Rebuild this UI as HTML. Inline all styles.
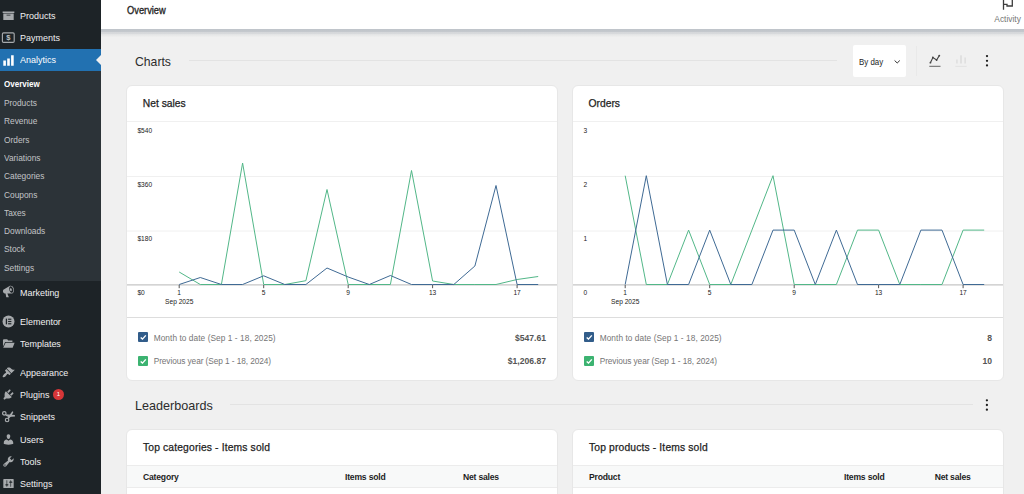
<!DOCTYPE html>
<html><head><meta charset="utf-8"><title>Analytics Overview</title>
<style>
*{box-sizing:border-box;margin:0;padding:0}
html,body{width:1024px;height:494px;overflow:hidden;background:#f0f0f0;font-family:"Liberation Sans",sans-serif;color:#1e1e1e}
#side{position:absolute;left:0;top:0;width:101px;height:494px;background:#1d2327}
#sub{position:absolute;left:0;top:71px;width:101px;height:210px;background:#2c3338}
#cur{position:absolute;left:0;top:48.600px;width:101px;height:22.400px;background:#2271b1}
#cur:after{content:"";position:absolute;right:0;top:6px;border:5.5px solid transparent;border-right-color:#f0f0f0;border-left:0}
.mi{position:absolute;left:20.3px;font-size:9.8px;transform:scaleX(.915);transform-origin:0 0;margin-top:1px;color:#f0f0f1;white-space:nowrap;line-height:12px}
.si{position:absolute;left:4.400px;font-size:8.7px;transform:scaleX(.96);transform-origin:0 0;margin-top:1px;color:#c3c4c7;white-space:nowrap;line-height:12px}
.ic{position:absolute;left:2px;width:14px;height:14px}
#head{position:absolute;left:101px;top:0;width:923px;height:29px;background:#fff}
#shadow{position:absolute;left:101px;top:29px;width:923px;height:8px;background:linear-gradient(#bfc4ca 0,#c4c8cd 32%,#d5d7da 42%,#d8dadc 60%,#e5e6e7 70%,#eaebeb 90%,#f0f0f0 100%)}
.abs{position:absolute;white-space:nowrap}
.card{position:absolute;background:#fff;border:1px solid #e7e7e7;border-radius:6px}
.h2{position:absolute;margin-top:1px;transform:scaleX(.97);transform-origin:0 0;font-size:12.6px;color:#2c2c2c;white-space:nowrap}
.hr{position:absolute;height:1px;background:#e3e3e3}
.ct{position:absolute;font-size:10.3px;-webkit-text-stroke:.25px #1e1e1e;color:#1e1e1e;white-space:nowrap}
.lg{position:absolute;font-size:8.3px;color:#757575;white-space:nowrap}
.lv{position:absolute;font-size:8.6px;font-weight:bold;color:#555;white-space:nowrap;text-align:right}
.cb{position:absolute;width:10.300px;height:10.300px;border-radius:1px}
.cb svg{position:absolute;left:0;top:0}
.th{position:absolute;font-size:8.6px;font-weight:bold;color:#1e1e1e;white-space:nowrap;letter-spacing:-0.2px}
svg.charts{position:absolute;left:0;top:0}
.ax{font-family:"Liberation Sans",sans-serif;font-size:6.6px;fill:#222}
</style></head><body>
<div class="card" style="left:126px;top:85px;width:432px;height:296px"></div>
<div class="card" style="left:572px;top:85px;width:432px;height:296px"></div>
<div class="card" style="left:126px;top:429px;width:432px;height:80px"></div>
<div class="card" style="left:572px;top:429px;width:432px;height:80px"></div>

<div id="side"><div id="sub"></div><div id="cur"></div>
<svg class="abs" style="left:1.9px;top:9.3px" width="13" height="13" viewBox="0 0 20 20" fill="#a7aaad"><path d="M19 4v2H1V4h18zM2 7h16v10H2V7zm11 3V9H7v1h6z"/></svg><svg class="abs" style="left:0;top:30px" width="18" height="16" viewBox="0 30 18 16"><rect x="2.400" y="32.900" width="11.800" height="9.500" rx="1.200" fill="none" stroke="#a7aaad" stroke-width="1.150"/><text x="8.300" y="40.400" text-anchor="middle" font-family="Liberation Sans, sans-serif" font-weight="bold" font-size="7.600" fill="#bfc1c4">$</text></svg><svg class="abs" style="left:1.9px;top:53.5px" width="13" height="13" viewBox="0 0 20 20" fill="#fff"><path d="M18 18V2h-4v16h4zm-6 0V7H8v11h4zm-6 0v-8H2v8h4z"/></svg><svg class="abs" style="left:2.4px;top:285px" width="13" height="13" viewBox="0 0 20 20" fill="#a7aaad"><path d="M18.15 5.94c.46 1.62.38 3.22-.02 4.48-.42 1.28-1.26 2.18-2.3 2.48-.16.06-.26.06-.4.06-.06.02-.12.02-.18.02-.06.02-.14.02-.22.02h-6.8l2.22 5.5c.02.14-.06.26-.14.34-.08.1-.24.16-.34.16H6.950c-.1 0-.26-.06-.34-.16-.08-.08-.16-.2-.14-.34l-1-5.500H4.250l-.02-.02c-.5.06-1.080-.18-1.540-.62s-.88-1.080-1.060-1.880c-.24-.8-.2-1.560-.02-2.200.18-.62.58-1.080 1.060-1.300l.02-.02 9-5.400c.1-.06.18-.1.24-.16.06-.04.14-.08.24-.12.16-.08.28-.12.5-.18 1.040-.3 2.240.1 3.220.98s1.840 2.240 2.260 3.860zm-2.580 5.980h-.02c.4-.1.74-.34 1.040-.7.580-.7.860-1.760.860-3.040 0-.64-.1-1.300-.28-1.980-.34-1.360-1.020-2.500-1.780-3.240s-1.680-1.100-2.460-.88c-.82.22-1.400.96-1.700 2-.32 1.040-.28 2.360.06 3.720.38 1.360 1 2.500 1.800 3.240.78.74 1.620 1.100 2.480.88zm-2.540-7.080c.22-.04.42-.02.62.04.38.16.76.48 1.020 1s.42 1.200.42 1.780c0 .3-.04.56-.12.8-.18.48-.44.84-.86.940-.34.1-.8-.06-1.140-.4s-.64-.86-.78-1.500c-.18-.62-.12-1.240.02-1.720s.48-.84.82-.94z"/></svg><svg class="abs" style="left:2.4px;top:315px" width="13" height="13" viewBox="0 0 20 20" fill="#a7aaad"><circle cx="10" cy="10" r="9.2"/><g fill="#1d2327"><rect x="5.8" y="5.6" width="2" height="8.8"/><rect x="9.4" y="5.6" width="5" height="1.8"/><rect x="9.4" y="9.1" width="5" height="1.8"/><rect x="9.4" y="12.6" width="5" height="1.8"/></g></svg><svg class="abs" style="left:2.4px;top:336.5px" width="13" height="13" viewBox="0 0 20 20" fill="#a7aaad"><path d="M1.5 4.5l1-1H8l1.500 2H16v2.200H4.800L1.500 14.500z"/><path d="M5.600 9H19.400l-3 7.500H1.800z"/></svg><svg class="abs" style="left:2.4px;top:365.5px" width="13" height="13" viewBox="0 0 20 20" fill="#a7aaad"><path d="M14.480 11.060L7.410 3.990l1.500-1.500c.5-.56 2.300-.47 3.510.32 1.210.8 1.430 1.280 2.910 2.100 1.180.64 2.450 1.260 4.450.85zm-.71.71L6.700 4.700 4.930 6.470c-.39.39-.39 1.020 0 1.410l1.060 1.060c.39.39.39 1.030 0 1.420-.6.6-1.430 1.110-2.210 1.690-.35.26-.7.53-1.010.84C1.430 14.230.4 16.080 1.400 17.070c.99 1 2.840-.03 4.180-1.360.31-.31.58-.66.85-1.020.57-.78 1.080-1.610 1.690-2.210.39-.39 1.020-.39 1.410 0l1.060 1.060c.39.39 1.020.39 1.410 0z"/></svg><svg class="abs" style="left:2.4px;top:387.5px" width="13" height="13" viewBox="0 0 20 20" fill="#a7aaad"><path d="M13.110 4.360L9.870 7.600 8 5.730l3.240-3.240c.35-.34 1.050-.2 1.560.32.520.51.660 1.210.31 1.550zm-8 1.770l.91-1.120 9.010 9.010-1.190.84c-.71.71-2.630 1.160-3.820 1.160H6.140L4.900 17.260c-.59.59-1.540.59-2.120 0-.59-.58-.59-1.530 0-2.120l1.240-1.240v-3.880c0-1.130.4-3.190 1.090-3.890zm7.260 3.970l3.240-3.240c.34-.35 1.040-.21 1.550.31.520.51.660 1.210.31 1.550l-3.240 3.250z"/></svg><svg class="abs" style="left:0;top:406px" width="20" height="20" viewBox="0 0 20 20"><g fill="none" stroke="#a7aaad" stroke-width="1.200"><circle cx="4.300" cy="7.300" r="1.750"/><circle cx="7.100" cy="14" r="1.750"/></g><path fill="#a7aaad" d="M5.600 8.300L14.800 8.900 15 10.500 8.400 10.900 5.300 9.400z"/><path fill="#a7aaad" d="M7.300 12.300L12.300 5.200 13.400 5.900 11.600 9.600 8.700 12.900z"/></svg><svg class="abs" style="left:2.4px;top:432.5px" width="13" height="13" viewBox="0 0 20 20" fill="#a7aaad"><path d="M10 9.250c-2.270 0-2.730-3.440-2.730-3.440C7 4.020 7.820 2 9.970 2c2.160 0 2.980 2.020 2.710 3.810 0 0-.41 3.440-2.680 3.440zm0 2.570L12.720 10c2.390 0 4.520 2.330 4.520 4.530v2.490s-3.650 1.130-7.240 1.130c-3.650 0-7.240-1.130-7.240-1.130v-2.490c0-2.250 1.940-4.480 4.470-4.480z"/></svg><svg class="abs" style="left:2.4px;top:454.5px" width="13" height="13" viewBox="0 0 20 20" fill="#a7aaad"><path d="M16.680 9.770c-1.340 1.340-3.300 1.670-4.950.99l-5.410 6.520c-.99.99-2.590.99-3.580 0s-.99-2.590 0-3.570l6.520-5.420c-.68-1.650-.35-3.610.99-4.950 1.280-1.280 3.120-1.620 4.720-1.060l-2.890 2.890 2.820 2.820 2.860-2.870c.53 1.580.18 3.390-1.080 4.650zM3.810 16.210c.4.390 1.040.39 1.430 0 .4-.4.4-1.040 0-1.430-.39-.4-1.030-.4-1.430 0-.39.390-.39 1.030 0 1.430z"/></svg><svg class="abs" style="left:2.4px;top:476.5px" width="13" height="13" viewBox="0 0 20 20" fill="#a7aaad"><path d="M18 16V4c0-.55-.45-1-1-1H3c-.55 0-1 .45-1 1v12c0 .55.45 1 1 1h14c.55 0 1-.45 1-1zM8 11h1c.55 0 1 .45 1 1s-.45 1-1 1H8v1.500c0 .28-.22.5-.5.5s-.5-.22-.5-.5V13H6c-.55 0-1-.45-1-1s.45-1 1-1h1V5.500c0-.28.220-.5.5-.5s.5.220.5.5V11zm5-2h-1c-.55 0-1-.45-1-1s.45-1 1-1h1V5.500c0-.28.220-.5.5-.5s.5.220.5.5V7h1c.55 0 1 .45 1 1s-.45 1-1 1h-1v5.500c0 .28-.22.5-.5.5s-.5-.22-.5-.5V9z"/></svg>
<div class="mi" style="top:9px">Products</div>
<div class="mi" style="top:31px">Payments</div>
<div class="mi" style="top:53px;color:#fff">Analytics</div>
<div class="si" style="top:77px;color:#fff;font-weight:bold;transform:scaleX(.925)">Overview</div>
<div class="si" style="top:96px">Products</div>
<div class="si" style="top:114px">Revenue</div>
<div class="si" style="top:133px">Orders</div>
<div class="si" style="top:151px">Variations</div>
<div class="si" style="top:169px">Categories</div>
<div class="si" style="top:188px">Coupons</div>
<div class="si" style="top:206px">Taxes</div>
<div class="si" style="top:224px">Downloads</div>
<div class="si" style="top:242px">Stock</div>
<div class="si" style="top:261px">Settings</div>
<div class="mi" style="top:286px">Marketing</div>
<div class="mi" style="top:315px">Elementor</div>
<div class="mi" style="top:337px">Templates</div>
<div class="mi" style="top:366px">Appearance</div>
<div class="mi" style="top:388px">Plugins</div>
<div class="abs" style="left:53px;top:389px;width:11px;height:11px;border-radius:6px;background:#d63638;color:#fff;font-size:6px;text-align:center;line-height:11px">1</div>
<div class="mi" style="top:410px">Snippets</div>
<div class="mi" style="top:433px">Users</div>
<div class="mi" style="top:455px">Tools</div>
<div class="mi" style="top:477px">Settings</div>
</div>

<div id="head"></div><div id="shadow"></div>
<div class="abs" style="left:127px;top:4.5px;font-size:10px;-webkit-text-stroke:.3px #1e1e1e;color:#1e1e1e;transform:scaleX(.93);transform-origin:0 0">Overview</div>
<div class="abs" style="left:994.3px;top:14px;font-size:8.4px;color:#757575;transform:scaleX(1);transform-origin:0 0">Activity</div>
<svg class="abs" style="left:995px;top:0" width="24" height="12" viewBox="995 0 24 12" fill="none" stroke="#3c3c3c" stroke-width="1.3"><path d="M1003.5 0V9.800M1003.5 4.400H1007V6H1012.300V0"/></svg>

<div class="h2" style="left:135px;top:54px">Charts</div>
<div class="hr" style="left:189px;top:60px;width:648px"></div>
<div class="abs" style="left:853px;top:45px;width:53px;height:32px;background:#fff;border-radius:2px"></div>
<div class="abs" style="left:858.5px;top:56.5px;font-size:8.6px;color:#1e1e1e;transform:scaleX(.92);transform-origin:0 0">By day</div>
<svg class="abs" style="left:890px;top:50px" width="110" height="24" viewBox="890 50 110 24" fill="none"><path d="M894.600 60.500L897.200 63 899.800 60.500" stroke="#333" stroke-width="1"/><path d="M929.300 66.300H940.500" stroke="#555" stroke-width="0.9"/><path d="M930.400 62.700L932.900 57.500 936.600 60 939.300 55.600" stroke="#444" stroke-width="1.1"/><g fill="#444"><circle cx="930.400" cy="62.700" r=".9"/><circle cx="932.900" cy="57.500" r=".9"/><circle cx="936.600" cy="60" r=".9"/><circle cx="939.300" cy="55.600" r=".9"/></g><g fill="#dedede"><rect x="956.200" y="59.500" width="1.500" height="4"/><rect x="960.100" y="55.300" width="1.800" height="8.200"/><rect x="964.400" y="57.500" width="1.500" height="6"/><rect x="955.400" y="65.900" width="11.200" height=".8"/></g><g fill="#1e1e1e"><circle cx="987" cy="56.100" r="1.150"/><circle cx="987" cy="60.800" r="1.150"/><circle cx="987" cy="65.400" r="1.150"/></g></svg>
<div class="abs" style="left:916px;top:46px;width:1px;height:30px;background:#e9e9e9"></div>

<div class="ct" style="left:142.800px;top:98px">Net sales</div>
<div class="ct" style="left:588.500px;top:98px">Orders</div>
<div class="hr" style="left:127px;top:121px;width:430px;background:#e8e8e8"></div>
<div class="hr" style="left:573px;top:121px;width:430px;background:#e8e8e8"></div>
<div class="hr" style="left:127px;top:317px;width:430px;background:#ddd"></div>
<div class="hr" style="left:573px;top:317px;width:430px;background:#ddd"></div>
<svg class="charts" width="1024" height="494" viewBox="0 0 1024 494"><line x1="127" x2="557" y1="121.5" y2="121.5" stroke="#f0f0f0" stroke-width="1"/><line x1="127" x2="557" y1="176.5" y2="176.5" stroke="#f0f0f0" stroke-width="1"/><line x1="127" x2="557" y1="231" y2="231" stroke="#f0f0f0" stroke-width="1"/><line x1="127" x2="557" y1="284.9" y2="284.9" stroke="#c6c6c6" stroke-width="1.15"/><text x="137.4" y="133" class="ax">$540</text><text x="137.4" y="187.2" class="ax">$360</text><text x="137.4" y="241.3" class="ax">$180</text><text x="137.4" y="295.2" class="ax">$0</text><line x1="179.2" x2="179.2" y1="285" y2="288.2" stroke="#555" stroke-width="1"/><text x="179.2" y="295.2" class="ax" text-anchor="middle">1</text><line x1="263.7" x2="263.7" y1="285" y2="288.2" stroke="#555" stroke-width="1"/><text x="263.7" y="295.2" class="ax" text-anchor="middle">5</text><line x1="348.2" x2="348.2" y1="285" y2="288.2" stroke="#555" stroke-width="1"/><text x="348.2" y="295.2" class="ax" text-anchor="middle">9</text><line x1="432.6" x2="432.6" y1="285" y2="288.2" stroke="#555" stroke-width="1"/><text x="432.6" y="295.2" class="ax" text-anchor="middle">13</text><line x1="517.1" x2="517.1" y1="285" y2="288.2" stroke="#555" stroke-width="1"/><text x="517.1" y="295.2" class="ax" text-anchor="middle">17</text><text x="179.2" y="304.3" class="ax" text-anchor="middle">Sep 2025</text><polyline fill="none" stroke="#52b788" stroke-width="1" points="179.2,272.0 200.3,284.5 221.4,284.5 242.6,163.0 263.7,284.5 284.8,284.5 305.9,280.7 327.0,189.5 348.2,284.5 369.3,284.5 390.4,284.5 411.5,170.5 432.6,281.0 453.8,284.5 474.9,284.5 496.0,284.5 517.1,279.5 538.2,276.5"/><polyline fill="none" stroke="#3f6a94" stroke-width="1" points="179.2,284.5 200.3,277.5 221.4,284.5 242.6,284.5 263.7,275.8 284.8,284.5 305.9,284.5 327.0,268.0 348.2,277.0 369.3,284.5 390.4,275.5 411.5,284.5 432.6,284.5 453.8,284.5 474.9,266.0 496.0,185.5 517.1,284.5 538.2,284.5"/><line x1="573" x2="1003" y1="121.5" y2="121.5" stroke="#f0f0f0" stroke-width="1"/><line x1="573" x2="1003" y1="176.5" y2="176.5" stroke="#f0f0f0" stroke-width="1"/><line x1="573" x2="1003" y1="231" y2="231" stroke="#f0f0f0" stroke-width="1"/><line x1="573" x2="1003" y1="284.9" y2="284.9" stroke="#c6c6c6" stroke-width="1.15"/><text x="583.4" y="133" class="ax">3</text><text x="583.4" y="187.2" class="ax">2</text><text x="583.4" y="241.3" class="ax">1</text><text x="583.4" y="295.2" class="ax">0</text><line x1="625.2" x2="625.2" y1="285" y2="288.2" stroke="#555" stroke-width="1"/><text x="625.2" y="295.2" class="ax" text-anchor="middle">1</text><line x1="709.7" x2="709.7" y1="285" y2="288.2" stroke="#555" stroke-width="1"/><text x="709.7" y="295.2" class="ax" text-anchor="middle">5</text><line x1="794.2" x2="794.2" y1="285" y2="288.2" stroke="#555" stroke-width="1"/><text x="794.2" y="295.2" class="ax" text-anchor="middle">9</text><line x1="878.6" x2="878.6" y1="285" y2="288.2" stroke="#555" stroke-width="1"/><text x="878.6" y="295.2" class="ax" text-anchor="middle">13</text><line x1="963.1" x2="963.1" y1="285" y2="288.2" stroke="#555" stroke-width="1"/><text x="963.1" y="295.2" class="ax" text-anchor="middle">17</text><text x="625.2" y="304.3" class="ax" text-anchor="middle">Sep 2025</text><polyline fill="none" stroke="#52b788" stroke-width="1" points="625.2,175.7 646.3,284.5 667.4,284.5 688.6,230.1 709.7,284.5 730.8,284.5 751.9,230.1 773.0,175.7 794.2,284.5 815.3,284.5 836.4,284.5 857.5,230.1 878.6,230.1 899.8,284.5 920.9,284.5 942.0,284.5 963.1,230.1 984.2,230.1"/><polyline fill="none" stroke="#3f6a94" stroke-width="1" points="625.2,284.5 646.3,175.7 667.4,284.5 688.6,284.5 709.7,230.1 730.8,284.5 751.9,284.5 773.0,230.1 794.2,230.1 815.3,284.5 836.4,230.1 857.5,284.5 878.6,284.5 899.8,284.5 920.9,230.1 942.0,230.1 963.1,284.5 984.2,284.5"/></svg>
<div class="cb" style="left:138px;top:332.200px;background:#325d8a"><svg width="10.3" height="10.3" viewBox="0 0 10.300 10.300" fill="none" stroke="#fff" stroke-width="1.400"><path d="M2.700 5.400L4.500 7.100 7.800 3.400"/></svg></div>
<div class="cb" style="left:138px;top:355.500px;background:#3cb371"><svg width="10.3" height="10.3" viewBox="0 0 10.300 10.300" fill="none" stroke="#fff" stroke-width="1.400"><path d="M2.700 5.400L4.500 7.100 7.800 3.400"/></svg></div>
<div class="cb" style="left:584px;top:332.200px;background:#325d8a"><svg width="10.3" height="10.3" viewBox="0 0 10.300 10.300" fill="none" stroke="#fff" stroke-width="1.400"><path d="M2.700 5.400L4.500 7.100 7.800 3.400"/></svg></div>
<div class="cb" style="left:584px;top:355.500px;background:#3cb371"><svg width="10.3" height="10.3" viewBox="0 0 10.300 10.300" fill="none" stroke="#fff" stroke-width="1.400"><path d="M2.700 5.400L4.500 7.100 7.800 3.400"/></svg></div>
<div class="lg" style="left:153.700px;top:333px;letter-spacing:.065px">Month to date (Sep 1 - 18, 2025)</div>
<div class="lg" style="left:153.700px;top:356px;letter-spacing:-.08px">Previous year (Sep 1 - 18, 2024)</div>
<div class="lg" style="left:599.700px;top:333px;letter-spacing:.065px">Month to date (Sep 1 - 18, 2025)</div>
<div class="lg" style="left:599.700px;top:356px;letter-spacing:-.08px">Previous year (Sep 1 - 18, 2024)</div>
<div class="lv" style="right:478px;top:333px">$547.61</div>
<div class="lv" style="right:478px;top:356px">$1,206.87</div>
<div class="lv" style="right:32px;top:333px">8</div>
<div class="lv" style="right:32px;top:356px">10</div>

<div class="h2" style="left:135px;top:398px;transform:scaleX(1)">Leaderboards</div>
<div class="hr" style="left:230px;top:404px;width:743px"></div>
<svg class="abs" style="left:980px;top:396px" width="14" height="18" viewBox="980 396 14 18" fill="#1e1e1e"><circle cx="986.900" cy="400.300" r="1.150"/><circle cx="986.900" cy="405" r="1.150"/><circle cx="986.900" cy="409.700" r="1.150"/></svg>

<div class="ct" style="left:143px;top:442.300px;letter-spacing:.15px">Top categories - Items sold</div>
<div class="ct" style="left:589px;top:442.300px;letter-spacing:.15px">Top products - Items sold</div>
<div class="abs" style="left:127px;top:465px;width:430px;height:23px;background:#f8f9f9;border-top:1px solid #ececec;border-bottom:1px solid #ececec"></div>
<div class="abs" style="left:573px;top:465px;width:430px;height:23px;background:#f8f9f9;border-top:1px solid #ececec;border-bottom:1px solid #ececec"></div>
<div class="th" style="left:143px;top:472px">Category</div>
<div class="th" style="left:345px;top:472px">Items sold</div>
<div class="th" style="left:463px;top:472px">Net sales</div>
<div class="th" style="left:589px;top:472px">Product</div>
<div class="th" style="left:844px;top:472px">Items sold</div>
<div class="th" style="left:934.700px;top:472px">Net sales</div>
</body></html>
